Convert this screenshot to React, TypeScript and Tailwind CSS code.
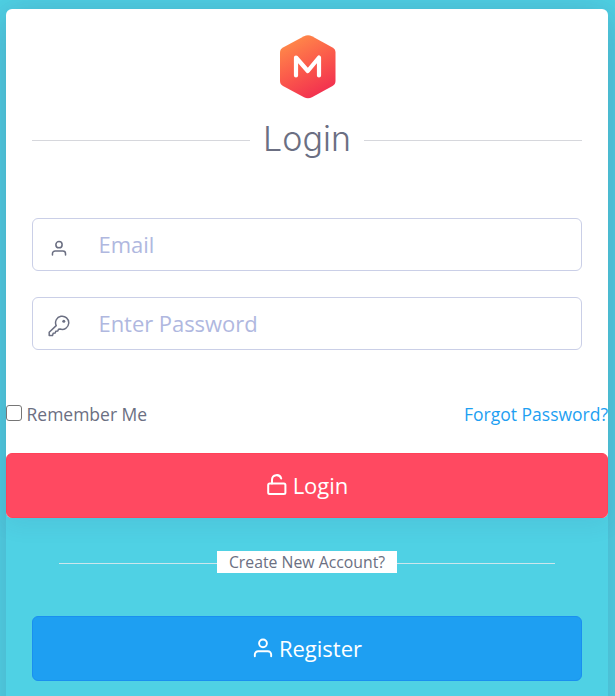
import React from "react";

const sans = "font-['Open_Sans','Noto_Sans',sans-serif]";

function Logo() {
  return (
    <svg className="block h-[64px] w-[56px]" viewBox="0 0 56 64" fill="none">
      <defs>
        <linearGradient id="hex" x1="10" y1="4" x2="40" y2="60" gradientUnits="userSpaceOnUse">
          <stop stopColor="#ff8a49" />
          <stop offset=".5" stopColor="#fb5b4b" />
          <stop offset="1" stopColor="#f2304f" />
        </linearGradient>
      </defs>
      <path d="M24 1.2Q28 -.6 32 1.2L52.5 12.5Q55.5 14.2 55.5 17.5V46Q55.5 49.3 52.5 51L32 62.3Q28 64.3 24 62.3L3 51Q0 49.3 0 46V17.5Q0 14.2 3 12.5Z" fill="url(#hex)" />
      <path d="M16 40.5V22.5L27.8 36L39 22.5V40.5" stroke="#fff" strokeWidth="4.2" strokeLinecap="round" strokeLinejoin="round" />
    </svg>
  );
}

function UserIcon({ className }: { className: string }) {
  return (
    <svg className={className} viewBox="0 0 24 24" fill="none" stroke="currentColor" strokeWidth="2.3" strokeLinecap="round" strokeLinejoin="round">
      <circle cx="12" cy="7" r="4.7" />
      <path d="M2.2 22.5v-2a4 4 0 0 1 4-4h11.6a4 4 0 0 1 4 4v2" />
    </svg>
  );
}

function KeyIcon() {
  return (
    <svg className="h-[22px] w-[22px]" viewBox="0 0 22 22" fill="none" stroke="currentColor" strokeWidth="1.5" strokeLinejoin="round">
      <path d="M8.2 10.6A6.6 6.6 0 1 1 12 14L10.5 14.3L9.8 16L7.8 16.3L7.2 18L5.2 18.2L4.5 20.6H1.2V17.3Z" />
      <circle cx="15.8" cy="6.3" r="1.5" fill="currentColor" stroke="none" />
    </svg>
  );
}

function LockIcon() {
  return (
    <svg className="mb-[2px] mr-[6px] h-[23px] w-[20px]" viewBox="0 0 20 23" fill="none" stroke="currentColor" strokeWidth="2" strokeLinecap="round" strokeLinejoin="round">
      <rect x="1.2" y="10.5" width="17.2" height="10.5" rx="1.5" />
      <path d="M5 10.5V6.8a4.7 4.7 0 0 1 9.2-1.3" />
    </svg>
  );
}

export default function App() {
  return (
    <main className={`h-[696px] w-[615px] overflow-hidden bg-[#4fd1e4] pl-[6px] pt-[9px] text-[#6b6f82] ${sans}`}>
      <section className="h-[760px] w-[602px] rounded-[6px] shadow-[0_8px_40px_rgba(62,57,107,0.22)]">
        <div className="h-[509px] rounded-[6px] bg-white shadow-[0_5px_25px_rgba(62,57,107,0.09)]">
          <div className="flex h-[90px] justify-center pl-[1px] pt-[26px]"><Logo /></div>
          <div className="mx-[26px] flex h-[82px] items-center gap-[14px]">
            <i className="h-px flex-1 bg-[#d6d7dc]" />
            <h1 className="mb-[2px] flex w-[86px] justify-center whitespace-nowrap font-['Inter',sans-serif] text-[34px] font-light leading-[44px]">Login</h1>
            <i className="h-px flex-1 bg-[#d6d7dc]" />
          </div>
          <div className="mx-[26px] mt-[37px] flex flex-col gap-[26px]">
            <label className="flex h-[53px] items-center rounded-[6px] border border-[#cacfe7] pl-[17px]">
              <UserIcon className="mt-[7px] h-[16px] w-[18px]" />
              <input placeholder="Email" className="ml-[30.5px] w-[300px] bg-transparent text-[22px] tracking-[-0.05px] outline-none placeholder:text-[#b0b8df]" />
            </label>
            <label className="flex h-[53px] items-center rounded-[6px] border border-[#cacfe7] pl-[15px]">
              <span className="mt-[4px]"><KeyIcon /></span>
              <input placeholder="Enter Password" className="ml-[28.5px] w-[300px] bg-transparent text-[22px] tracking-[-0.05px] outline-none placeholder:text-[#b0b8df]" />
            </label>
          </div>
          <div className="mt-[51px] flex h-[26px] items-center justify-between whitespace-nowrap text-[17.5px]">
            <label className="flex items-center">
              <input type="checkbox" className="mr-[4.5px] mt-[-2px] h-[16px] w-[16px] appearance-none rounded-[3px] border border-[#767676] bg-white" />
              Remember Me
            </label>
            <a className="text-[#1e9ff2]">Forgot Password?</a>
          </div>
          <button className="mt-[26px] flex h-[65px] w-full items-center justify-center rounded-[6px] border border-[#ff4258] bg-[#ff4961] pl-[1px] text-[22px] text-white">
            <LockIcon />Login
          </button>
        </div>
        <div className="mx-[53px] mt-[33px] flex h-[22px] items-center">
          <i className="mt-[3px] h-px flex-1 bg-[#cce6ec]" />
          <span className="w-[180px] whitespace-nowrap bg-white text-center text-[15.8px] leading-[22px]">Create New Account?</span>
          <i className="mt-[3px] h-px flex-1 bg-[#cce6ec]" />
        </div>
        <div className="mt-[43px] px-[26px]">
          <button className="flex h-[65px] w-full items-center justify-center rounded-[6px] border border-[#1a8ff0] bg-[#1e9ff2] pl-[1px] text-[22px] text-white">
            <UserIcon className="mb-[3px] mr-[6px] h-[21px] w-[20px]" />Register
          </button>
        </div>
      </section>
    </main>
  );
}
